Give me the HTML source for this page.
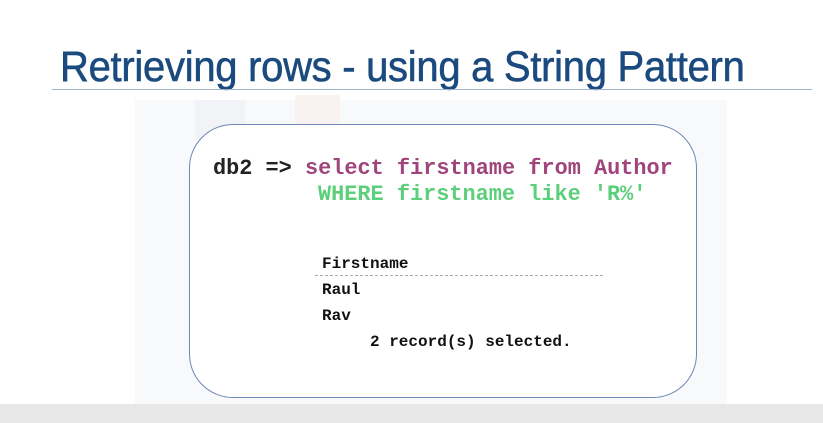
<!DOCTYPE html>
<html><head><style>
html,body{margin:0;padding:0;}
body{width:823px;height:423px;background:#fff;position:relative;overflow:hidden;font-family:"Liberation Sans",sans-serif;}
.panel{position:absolute;left:135px;top:100px;width:592px;height:310px;background:#f8f9fb;}
.p2{position:absolute;left:195px;top:100px;width:50px;height:40px;background:#f2f3f6;}
.p3{position:absolute;left:295px;top:95px;width:45px;height:45px;background:#faf2f1;}
.strip{position:absolute;left:0;top:404px;width:823px;height:19px;background:#e7e7e8;}
.title{position:absolute;left:60px;top:43px;font-size:43px;color:#1b4a7e;white-space:nowrap;transform:scaleX(0.93);transform-origin:left top;letter-spacing:-0.3px;-webkit-text-stroke:0.6px #1b4a7e;}
.rule{position:absolute;left:52px;top:89px;width:760px;height:1px;background:#9fb3cc;}
.box{position:absolute;left:189px;top:124px;width:506px;height:272px;border:1.3px solid #6e86b8;border-radius:44px;background:#fff;}
.code{position:absolute;font-family:"Liberation Mono",monospace;font-weight:bold;white-space:pre;}
.l1{left:213px;top:156px;font-size:21.9px;color:#222;}
.l2{left:318px;top:182px;font-size:21.9px;color:#5ccf7a;}
.pu{color:#a0457c;}
.t{font-size:16px;color:#111;}
.dash{position:absolute;left:315px;top:275px;width:288px;border-top:1px dashed #aaa;}
</style></head><body>
<div class="panel"></div><div class="p2"></div><div class="p3"></div>
<div class="strip"></div>
<div class="title">Retrieving rows - using a String Pattern</div>
<div class="rule"></div>
<div class="box"></div>
<div class="code l1">db2 =&gt; <span class="pu">select firstname from Author</span></div>
<div class="code l2">WHERE firstname like 'R%'</div>
<div class="code t" style="left:322px;top:255px;">Firstname</div>
<div class="dash"></div>
<div class="code t" style="left:322px;top:281px;">Raul</div>
<div class="code t" style="left:322px;top:307px;">Rav</div>
<div class="code t" style="left:370px;top:333px;">2 record(s) selected.</div>
</body></html>
